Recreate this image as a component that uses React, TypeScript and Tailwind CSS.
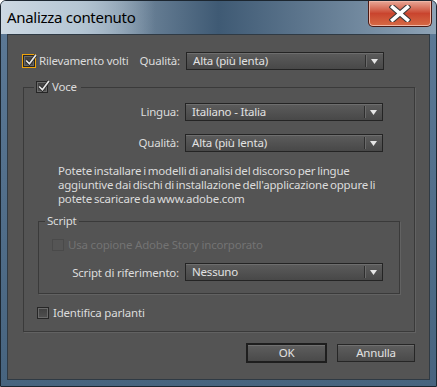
import React from "react";

/** ====== 공통 스타일 ====== */
const FONT = "font-['Noto_Sans','Open_Sans',sans-serif]";

function CheckBox({
  checked,
  focused,
  disabled,
}: {
  checked?: boolean;
  focused?: boolean;
  disabled?: boolean;
}) {
  return (
    <span
      className={
        "inline-flex w-[14px] h-[14px] shrink-0 items-center justify-center " +
        (focused ? "border border-[#f0a30a]" : "border border-transparent")
      }
    >
      <span
        className={
          "relative flex w-[12px] h-[12px] items-center justify-center border " +
          (disabled
            ? "border-[#4a4a4a] bg-[#555555]"
            : "border-[#262626] bg-gradient-to-b from-[#3f3f3f] to-[#505050] shadow-[inset_0_0_0_1px_#6a6a6a]")
        }
      >
        {checked && (
          <svg
            viewBox="0 0 12 12"
            className="absolute -top-[2px] left-[0px] w-[13px] h-[13px]"
          >
            <polyline
              points="2,6 5,9 11,1"
              fill="none"
              stroke="#2a2a2a"
              strokeWidth="3"
            />
            <polyline
              points="2,6 5,9 11,1"
              fill="none"
              stroke="#e6e6e6"
              strokeWidth="1.6"
            />
          </svg>
        )}
      </span>
    </span>
  );
}

function Select({ value }: { value: string }) {
  return (
    <div className="w-[198px] h-[18px] flex border border-[#242424] bg-gradient-to-b from-[#5c5c5c] to-[#484848] shadow-[inset_0_1px_0_#6e6e6e]">
      <span className="flex-1 pl-[6px] leading-[16px] text-[#e2e2e2]">
        {value}
      </span>
      <span className="w-[1px] my-[2px] bg-[#2e2e2e] shadow-[1px_0_0_#6a6a6a]" />
      <span className="w-[17px] flex items-center justify-center">
        <svg viewBox="0 0 7 5" className="w-[7px] h-[5px]">
          <polygon points="0,0 7,0 3.5,5" fill="#e6e6e6" />
        </svg>
      </span>
    </div>
  );
}

function Button({ label, primary }: { label: string; primary?: boolean }) {
  return (
    <button
      type="button"
      className={
        "flex items-center justify-center text-[#e2e2e2] bg-gradient-to-b from-[#5e5e5e] to-[#4a4a4a] " +
        (primary
          ? "w-[81px] h-[20px] border-2 border-[#1e1e1e] shadow-[inset_0_1px_0_#707070]"
          : "w-[78px] h-[18px] my-[1px] border border-[#262626] shadow-[inset_0_1px_0_#707070]")
      }
    >
      {label}
    </button>
  );
}

/** ====== 창 ====== */
export default function App() {
  return (
    <div
      className={
        "w-[437px] h-[387px] flex flex-col rounded-t-[6px] border border-[#1c2630] bg-gradient-to-b from-[#5d7a97] to-[#47647f] overflow-hidden " +
        FONT
      }
    >
      {/* 타이틀 바 */}
      <div className="h-[33px] shrink-0 flex items-start justify-between bg-gradient-to-r from-[#c3d1dc] via-[#3f5a74] to-[#8ea3b6]">
        <div className="h-[33px] flex items-center pl-[6px] pr-[20px] bg-gradient-to-r from-[#cdd9e3] via-[#b5c6d4] to-transparent">
          <span className="text-[15px] text-black leading-none tracking-[-0.3px]">
            Analizza contenuto
          </span>
        </div>
        <button
          type="button"
          aria-label="Chiudi"
          className="mr-[4px] w-[64px] h-[26px] flex items-center justify-center rounded-b-[5px] border border-t-0 border-[#4b1a14] bg-gradient-to-b from-[#e7a797] via-[#c9442e] to-[#d66a45] shadow-[inset_0_0_0_1px_#f0b6a6]"
        >
          <svg viewBox="0 0 20 16" className="w-[22px] h-[17px]">
            <path
              d="M3 2 L17 14 M17 2 L3 14"
              stroke="#3a3a3a"
              strokeWidth="5.4"
              strokeLinecap="square"
            />
            <path
              d="M3 2 L17 14 M17 2 L3 14"
              stroke="#ffffff"
              strokeWidth="3.4"
              strokeLinecap="square"
            />
          </svg>
        </button>
      </div>

      {/* 본문 영역 */}
      <div className="mx-[6px] h-[346px] bg-[#545454] border border-[#2f3a44] text-[11.5px] tracking-[-0.2px] text-[#dcdcdc]">
        {/* 얼굴 인식 */}
        <div className="mt-[17px] flex items-center h-[18px]">
          <div className="w-[172px] flex items-center justify-between pl-[14px]">
            <div className="flex items-center gap-[3px]">
              <CheckBox checked focused />
              <span>Rilevamento volti</span>
            </div>
            <span>Qualità:</span>
          </div>
          <div className="ml-[6px]">
            <Select value="Alta (più lenta)" />
          </div>
        </div>

        {/* 음성 그룹 */}
        <fieldset className="mt-[10px] ml-[15px] w-[392px] h-[252px] border border-[#3a3a3a] shadow-[1px_1px_0_#626262] px-0">
          <legend className="ml-[10px] px-[1px] flex items-center gap-[3px] h-[14px]">
            <CheckBox checked />
            <span className="pr-[3px]">Voce</span>
          </legend>

          <div className="mt-[9px] flex items-center">
            <span className="w-[155px] text-right">Lingua:</span>
            <div className="ml-[6px]">
              <Select value="Italiano - Italia" />
            </div>
          </div>
          <div className="mt-[13px] flex items-center">
            <span className="w-[155px] text-right">Qualità:</span>
            <div className="ml-[6px]">
              <Select value="Alta (più lenta)" />
            </div>
          </div>

          <p className="mt-[12px] pl-[34px] leading-[14px] [word-spacing:-1px]">
            Potete installare i modelli di analisi del discorso per lingue
            <br />
            aggiuntive dai dischi di installazione dell'applicazione oppure li
            <br />
            potete scaricare da www.adobe.com
          </p>

          {/* 스크립트 그룹 */}
          <fieldset className="mt-[8px] ml-[14px] w-[362px] h-[80px] border border-[#3a3a3a] shadow-[1px_1px_0_#626262] px-0">
            <legend className="ml-[6px] px-[2px] h-[14px] leading-[14px]">
              Script
            </legend>
            <div className="mt-[8px] ml-[12px] flex items-center gap-[3px] text-[#737373]">
              <CheckBox disabled />
              <span>Usa copione Adobe Story incorporato</span>
            </div>
            <div className="mt-[10px] flex items-center">
              <span className="w-[140px] text-right">Script di riferimento:</span>
              <div className="ml-[6px]">
                <Select value="Nessuno" />
              </div>
            </div>
          </fieldset>

          <div className="mt-[10px] ml-[12px] flex items-center gap-[3px]">
            <CheckBox />
            <span>Identifica parlanti</span>
          </div>
        </fieldset>

        {/* 버튼 */}
        <div className="mt-[11px] w-[407px] flex justify-end gap-[10px]">
          <Button label="OK" primary />
          <Button label="Annulla" />
        </div>
      </div>
    </div>
  );
}
